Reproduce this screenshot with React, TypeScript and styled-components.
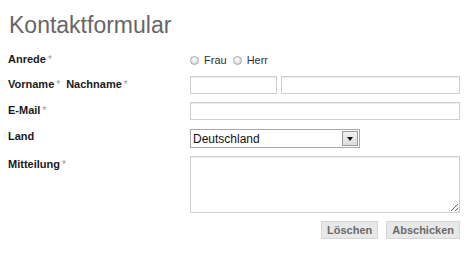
import React from 'react';
import styled, { createGlobalStyle } from 'styled-components';

const GlobalStyle = createGlobalStyle`
  html, body {
    margin: 0;
    padding: 0;
    background: #ffffff;
  }
  body {
    font-family: 'Liberation Sans', Arial, sans-serif;
    color: #222222;
  }
`;

const Page = styled.div`
  padding: 8px 8px 0 8px;
  width: 452px;
`;

const Title = styled.h1`
  margin: 4px 0 13px 1px;
  font-size: 23px;
  line-height: 26px;
  font-weight: normal;
  color: #666666;
`;

const Form = styled.form`
  display: grid;
  grid-template-columns: 182px 270px;
  row-gap: 8px;
  align-items: start;
`;

const Label = styled.div`
  padding-top: 2px;
  font-size: 11px;
  line-height: 13px;
  font-weight: bold;
  color: #1a1a1a;
  white-space: nowrap;
`;

const Required = styled.span`
  margin-left: 2px;
  font-weight: normal;
  font-size: 10px;
  color: #999999;
`;

const SecondLabel = styled.span`
  margin-left: 6px;
`;

const RadioGroup = styled.div`
  display: flex;
  align-items: center;
  height: 16px;
  padding-top: 1px;
  font-size: 11px;
  color: #333333;
`;

const Radio = styled.span`
  display: inline-block;
  box-sizing: border-box;
  width: 9px;
  height: 9px;
  margin-right: 5px;
  border-radius: 50%;
  border: 1px solid #a8a8a8;
  background: radial-gradient(circle at 40% 35%, #ffffff 0%, #e2e2e2 60%, #cacaca 100%);
`;

const RadioText = styled.span`
  margin-right: 6px;
`;

const InputRow = styled.div`
  display: flex;
  gap: 4px;
`;

const TextInput = styled.input<{ $width?: number }>`
  box-sizing: border-box;
  height: 18px;
  width: ${p => (p.$width ? `${p.$width}px` : '100%')};
  flex: ${p => (p.$width ? 'none' : '1')};
  margin: 0;
  padding: 0 3px;
  border: 1px solid #cfcfcf;
  box-shadow: inset 0 1px 0 #ececec;
  font-family: 'Liberation Sans', Arial, sans-serif;
  font-size: 11px;
  outline: none;
`;

const SelectBox = styled.div`
  box-sizing: border-box;
  display: flex;
  align-items: center;
  width: 170px;
  height: 19px;
  margin-top: 1px;
  border: 1px solid #a9a9a9;
  background: #ffffff;
`;

const SelectText = styled.span`
  flex: 1;
  padding-left: 2px;
  font-size: 12px;
  color: #111111;
`;

const SelectButton = styled.span`
  box-sizing: border-box;
  display: flex;
  align-items: center;
  justify-content: center;
  width: 16px;
  height: 15px;
  margin-right: 1px;
  border: 1px solid #9a9a9a;
  background: linear-gradient(#f2f2f2, #dcdcdc);

  &::after {
    content: '';
    width: 0;
    height: 0;
    border-left: 3.5px solid transparent;
    border-right: 3.5px solid transparent;
    border-top: 4px solid #111111;
  }
`;

const TextArea = styled.textarea`
  box-sizing: border-box;
  display: block;
  width: 270px;
  height: 57px;
  margin: 0;
  padding: 2px;
  border: 1px solid #cfcfcf;
  box-shadow: inset 0 1px 0 #ececec;
  font-family: 'Liberation Sans', Arial, sans-serif;
  font-size: 11px;
  outline: none;
`;

const ButtonRow = styled.div`
  display: flex;
  justify-content: flex-end;
  gap: 8px;
`;

const Button = styled.button`
  box-sizing: border-box;
  height: 18px;
  margin: 0;
  padding: 0 5px;
  border: 1px solid #d6d6d6;
  background: #e8e8e8;
  font-family: 'Liberation Sans', Arial, sans-serif;
  font-size: 11px;
  font-weight: bold;
  color: #6a6a6a;
  line-height: 16px;
`;

const App: React.FC = () => {
  return (
    <Page>
      <GlobalStyle />
      <Title>Kontaktformular</Title>
      <Form onSubmit={e => e.preventDefault()}>
        <Label>
          Anrede<Required>*</Required>
        </Label>
        <RadioGroup>
          <Radio />
          <RadioText>Frau</RadioText>
          <Radio />
          <RadioText>Herr</RadioText>
        </RadioGroup>

        <Label>
          Vorname<Required>*</Required>
          <SecondLabel>Nachname</SecondLabel>
          <Required>*</Required>
        </Label>
        <InputRow>
          <TextInput $width={87} />
          <TextInput />
        </InputRow>

        <Label>
          E-Mail<Required>*</Required>
        </Label>
        <TextInput />

        <Label>Land</Label>
        <SelectBox>
          <SelectText>Deutschland</SelectText>
          <SelectButton />
        </SelectBox>

        <Label>
          Mitteilung<Required>*</Required>
        </Label>
        <TextArea />

        <div />
        <ButtonRow>
          <Button type="button">Löschen</Button>
          <Button type="submit">Abschicken</Button>
        </ButtonRow>
      </Form>
    </Page>
  );
};

export default App;
